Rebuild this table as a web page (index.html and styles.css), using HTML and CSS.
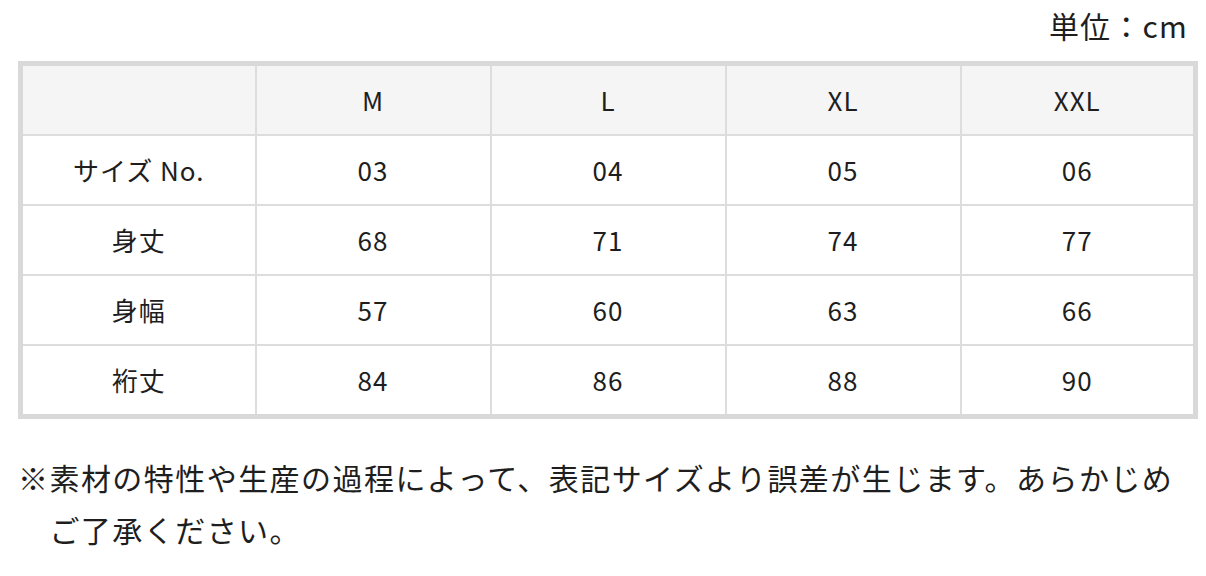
FILE: index.html
```html
<!DOCTYPE html>
<html lang="ja">
<head>
<meta charset="utf-8">
<title>サイズ表</title>
<link rel="stylesheet" href="styles.css">
</head>
<body>
<div class="wrap">
  <p class="unit">単位：cm</p>
  <table class="size-table">
    <thead>
      <tr><th></th><th>M</th><th>L</th><th>XL</th><th>XXL</th></tr>
    </thead>
    <tbody>
      <tr><th>サイズ No.</th><td>03</td><td>04</td><td>05</td><td>06</td></tr>
      <tr><th>身丈</th><td>68</td><td>71</td><td>74</td><td>77</td></tr>
      <tr><th>身幅</th><td>57</td><td>60</td><td>63</td><td>66</td></tr>
      <tr><th>裄丈</th><td>84</td><td>86</td><td>88</td><td>90</td></tr>
    </tbody>
  </table>
  <p class="note">※素材の特性や生産の過程によって、表記サイズより誤差が生じます。あらかじめご了承ください。</p>
</div>
</body>
</html>
```
FILE: styles.css
```css
html, body {
  margin: 0;
  padding: 0;
  background: #ffffff;
}
body {
  font-family: "Noto Sans CJK JP", "Noto Sans", sans-serif;
  color: #1e1e1e;
}
.wrap {
  width: 1180px;
  margin-left: 18px;
}
.unit {
  margin: 0 0 11px 0;
  padding-right: 10px;
  text-align: right;
  font-size: 30px;
  line-height: 50px;
  letter-spacing: 1.2px;
}
.size-table {
  width: 1180px;
  border-collapse: collapse;
  table-layout: fixed;
  border: 5px solid #d9d9d9;
}
.size-table th,
.size-table td {
  height: 68px;
  padding: 0;
  border: 2px solid #dddddd;
  text-align: center;
  vertical-align: middle;
  font-size: 26px;
  font-weight: 400;
  letter-spacing: 1px;
  line-height: 1;
}
.size-table thead th {
  background: #f5f5f5;
}
.note {
  margin: 32px 0 0 0;
  padding-left: 31.4px;
  text-indent: -31.4px;
  font-size: 30px;
  line-height: 52px;
  letter-spacing: 1.45px;
}
```
